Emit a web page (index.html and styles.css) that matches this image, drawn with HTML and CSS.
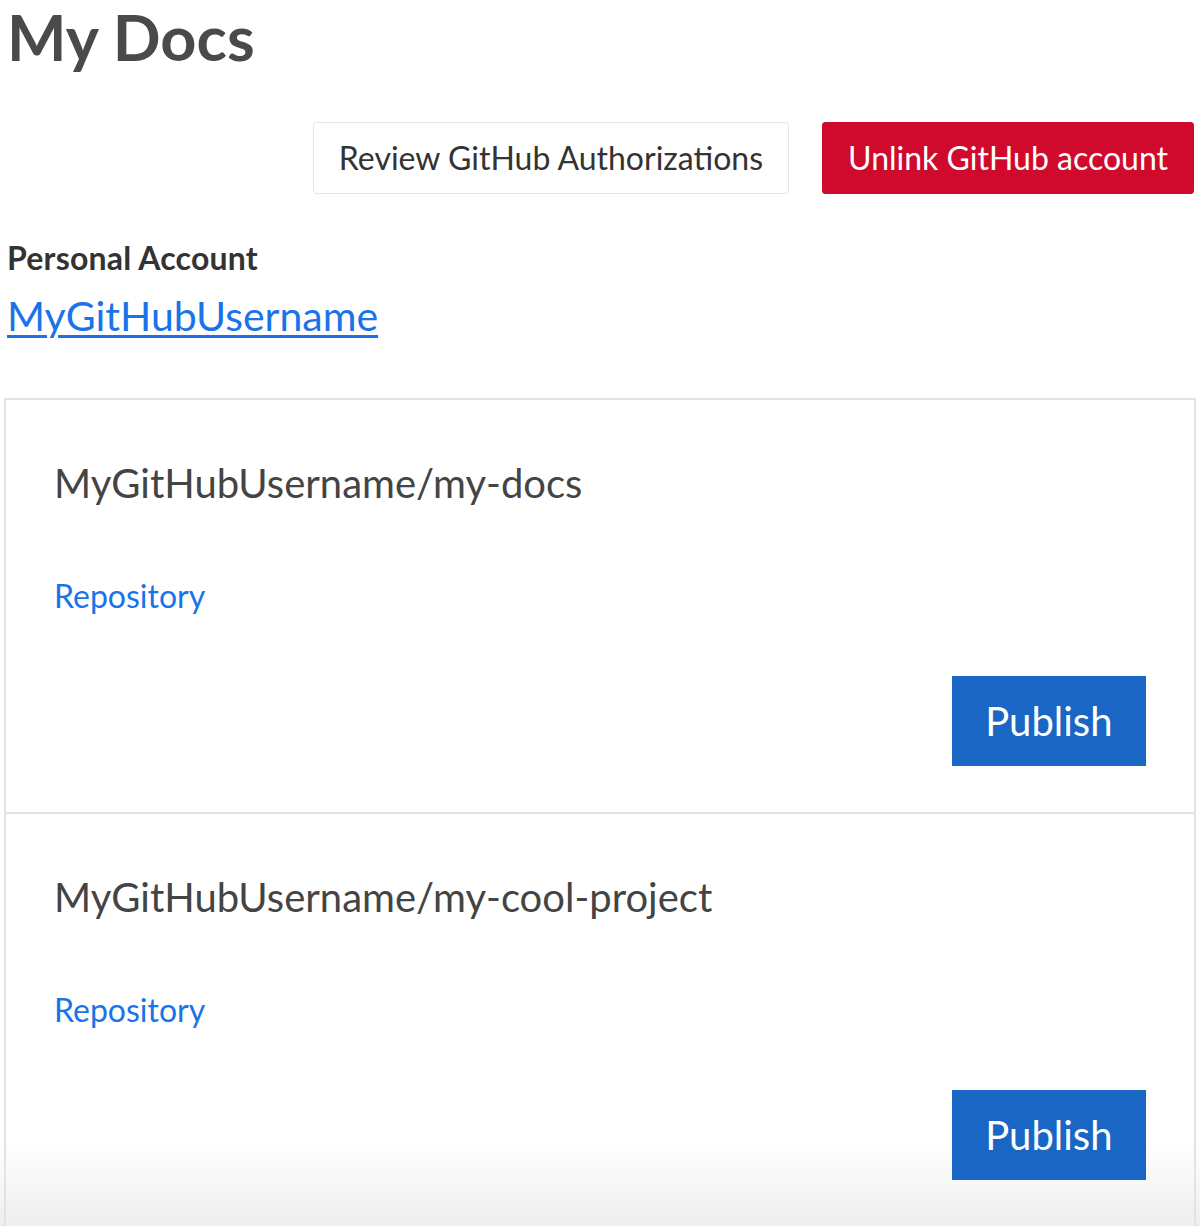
FILE: index.html
```html
<!DOCTYPE html>
<html lang="en">
<head>
<meta charset="utf-8">
<title>My Docs</title>
<link rel="stylesheet" href="styles.css">
</head>
<body>
<div class="page">
  <h1 class="title">My Docs</h1>
  <div class="actions">
    <button class="btn btn-outline">Review GitHub Authorizations</button>
    <button class="btn btn-danger">Unlink GitHub account</button>
  </div>
  <div class="account">
    <div class="account-label">Personal Account</div>
    <a class="account-link" href="#">MyGitHubUsername</a>
  </div>
  <div class="repo-list">
    <div class="repo">
      <div class="repo-name">MyGitHubUsername/my-docs</div>
      <a class="repo-link" href="#">Repository</a>
      <div class="repo-actions"><button class="btn-publish">Publish</button></div>
    </div>
    <div class="repo">
      <div class="repo-name">MyGitHubUsername/my-cool-project</div>
      <a class="repo-link" href="#">Repository</a>
      <div class="repo-actions"><button class="btn-publish">Publish</button></div>
    </div>
  </div>
</div>
</body>
</html>
```
FILE: styles.css
```css
html {
  margin: 0;
  padding: 0;
  min-height: 100%;
  background: linear-gradient(to bottom, #ffffff 0, #ffffff calc(100% - 88px), #eeeeee 100%);
}
body {
  margin: 0;
  padding: 0;
  font-family: Lato, "Open Sans", sans-serif;
  color: #333333;
}
.page {
  padding: 0 4px 0 7px;
}
.title {
  margin: 0;
  font-size: 63px;
  line-height: 74px;
  font-weight: 700;
  color: #4a4a4a;
}
.actions {
  display: flex;
  justify-content: flex-end;
  gap: 33px;
  margin-top: 48px;
  margin-right: 2px;
}
.btn {
  font-family: Lato, sans-serif;
  font-size: 32px;
  line-height: 38px;
  padding: 16px 25px;
  border-radius: 3px;
  cursor: pointer;
}
.btn-outline {
  background: #ffffff;
  color: #333333;
  border: 1px solid #e6e6e6;
}
.btn-danger {
  background: #cf0a2c;
  color: #ffffff;
  border: 1px solid #cf0a2c;
}
.account {
  margin-top: 45px;
  display: flex;
  flex-direction: column;
  align-items: flex-start;
}
.account-label {
  font-size: 32px;
  line-height: 38px;
  font-weight: 700;
  letter-spacing: 0.2px;
  color: #333333;
}
.account-link {
  margin-top: 15px;
  font-size: 41px;
  line-height: 48px;
  color: #1a73e8;
  text-decoration: underline;
  text-decoration-thickness: 3px;
  text-underline-offset: 4px;
}
.repo-list {
  margin-top: 58px;
  margin-left: -3px;
  border: 2px solid #e3e3e3;
}
.repo {
  display: flex;
  flex-direction: column;
  align-items: flex-start;
  padding: 60px 48px 46px 48px;
}
.repo + .repo {
  border-top: 2px solid #e3e3e3;
}
.repo-name {
  font-size: 40px;
  line-height: 46px;
  color: #444444;
}
.repo-link {
  margin-top: 71px;
  font-size: 32px;
  line-height: 38px;
  color: #1a73e8;
  text-decoration: none;
}
.repo-actions {
  align-self: stretch;
  display: flex;
  justify-content: flex-end;
  margin-top: 61px;
}
.btn-publish {
  font-family: Lato, sans-serif;
  font-size: 40px;
  line-height: 48px;
  padding: 21px 33.5px;
  background: #1966c4;
  color: #ffffff;
  border: none;
  border-radius: 0;
  cursor: pointer;
}
```
